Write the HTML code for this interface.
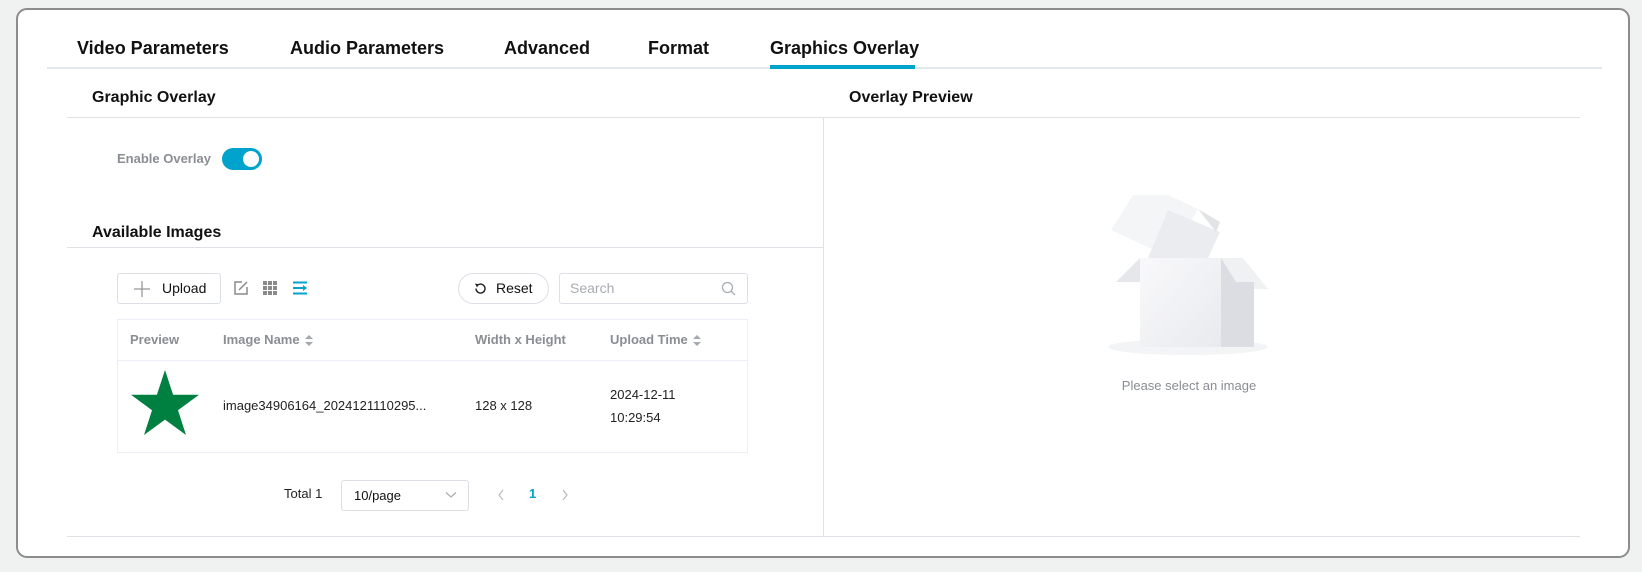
<!DOCTYPE html>
<html><head><meta charset="utf-8"><style>
*{margin:0;padding:0;box-sizing:border-box}
body{width:1642px;height:572px;background:#f0f1f1;font-family:"Liberation Sans",Arial,sans-serif;position:relative;overflow:hidden;color:#111}
.a{position:absolute;white-space:nowrap}
.card{position:absolute;left:16px;top:8px;width:1614px;height:550px;background:#fff;border:2px solid #8c8c8c;border-radius:11px}
.tab{font-size:18px;font-weight:bold;top:38px}
.h{font-size:16px;font-weight:bold}
.line{position:absolute;height:1px;background:#dfe1e6}
.th{font-size:13px;font-weight:bold;color:#8a8d93;top:332px}
.td{font-size:13px;color:#222}
.sort{display:inline-block;vertical-align:middle;margin-left:5px;width:8px;height:11px;position:relative}
.sort:before{content:"";position:absolute;top:0;left:0;border-left:4px solid transparent;border-right:4px solid transparent;border-bottom:4px solid #a5a8ad}
.sort:after{content:"";position:absolute;bottom:0;left:0;border-left:4px solid transparent;border-right:4px solid transparent;border-top:4px solid #a5a8ad}
</style></head><body>
<div class="card"></div>
<div class="a tab" style="left:77px">Video Parameters</div>
<div class="a tab" style="left:290px">Audio Parameters</div>
<div class="a tab" style="left:504px">Advanced</div>
<div class="a tab" style="left:648px">Format</div>
<div class="a tab" style="left:770px">Graphics Overlay</div>
<div class="line" style="left:47px;top:67px;width:1555px;height:2px;background:#e3e6ea"></div>
<div class="a" style="left:770px;top:65px;width:145px;height:4px;background:#00a3cc"></div>

<div class="a h" style="left:92px;top:89px">Graphic Overlay</div>
<div class="a h" style="left:849px;top:89px">Overlay Preview</div>
<div class="line" style="left:67px;top:117px;width:1513px"></div>
<div class="a" style="left:823px;top:117px;width:1px;height:419px;background:#dfe1e6"></div>

<div class="a" style="left:117px;top:151px;font-size:13px;font-weight:bold;color:#8a8d93">Enable Overlay</div>
<div class="a" style="left:222px;top:148px;width:40px;height:22px;border-radius:11px;background:#00a3cc"><div style="position:absolute;right:3px;top:3px;width:16px;height:16px;border-radius:50%;background:#fff"></div></div>

<div class="a h" style="left:92px;top:224px">Available Images</div>
<div class="line" style="left:67px;top:247px;width:756px"></div>

<div class="a" style="left:117px;top:273px;width:104px;height:31px;border:1px solid #dcdfe6;border-radius:3px;font-size:14px;line-height:29px;padding-left:44px">Upload</div>
<svg class="a" style="left:133px;top:280px" width="18" height="18"><path d="M9 1V17M1 9H17" stroke="#999" stroke-width="1.3"/></svg>
<svg class="a" style="left:233px;top:280px" width="16" height="16"><path d="M9 2H2V14H14V7" fill="none" stroke="#8a8a8a" stroke-width="1.5"/><path d="M6 10L14 2" stroke="#8a8a8a" stroke-width="1.5"/></svg>
<svg class="a" style="left:262px;top:280px" width="16" height="16" fill="#8a8a8a"><rect x="1" y="1" width="4" height="4"/><rect x="6" y="1" width="4" height="4"/><rect x="11" y="1" width="4" height="4"/><rect x="1" y="6" width="4" height="4"/><rect x="6" y="6" width="4" height="4"/><rect x="11" y="6" width="4" height="4"/><rect x="1" y="11" width="4" height="4"/><rect x="6" y="11" width="4" height="4"/><rect x="11" y="11" width="4" height="4"/></svg>
<svg class="a" style="left:292px;top:280px" width="16" height="16"><path d="M1 2.5H15M1 8H11M1 13.5H15" stroke="#00a3cc" stroke-width="2"/><path d="M11 5L15 8L11 11Z" fill="#00a3cc"/></svg>

<div class="a" style="left:458px;top:273px;width:91px;height:31px;border:1px solid #dcdfe6;border-radius:16px;font-size:14px;line-height:29px;padding-left:37px">Reset</div>
<svg class="a" style="left:474px;top:282px" width="13" height="13"><path d="M3.5 3.2A4.5 4.5 0 1 1 2 6.5" fill="none" stroke="#222" stroke-width="1.4"/><path d="M1 1.5L4.8 2.2L3 5.5Z" fill="#222"/></svg>
<div class="a" style="left:559px;top:273px;width:189px;height:31px;border:1px solid #dcdfe6;border-radius:3px;font-size:14px;line-height:29px;padding-left:10px;color:#a8abb2">Search</div>
<svg class="a" style="left:721px;top:281px" width="15" height="15"><circle cx="6.5" cy="6.5" r="5" fill="none" stroke="#a8abb2" stroke-width="1.3"/><path d="M10 10L14 14" stroke="#a8abb2" stroke-width="1.3"/></svg>

<div class="a" style="left:117px;top:319px;width:631px;height:134px;border:1px solid #ebeef5"></div>
<div class="line" style="left:117px;top:360px;width:631px;background:#ebeef5"></div>
<div class="a th" style="left:130px">Preview</div>
<div class="a th" style="left:223px">Image Name<span class="sort"></span></div>
<div class="a th" style="left:475px">Width x Height</div>
<div class="a th" style="left:610px">Upload Time<span class="sort"></span></div>
<svg class="a" style="left:130px;top:369px" width="70" height="68"><polygon points="35,1 43.1,25.8 69,25.8 48,41.2 56,66 35,50.6 14,66 22,41.2 1,25.8 26.9,25.8" fill="#008040"/></svg>
<div class="a td" style="left:223px;top:398px">image34906164_2024121110295...</div>
<div class="a td" style="left:475px;top:398px">128 x 128</div>
<div class="a td" style="left:610px;top:387px">2024-12-11</div>
<div class="a td" style="left:610px;top:410px">10:29:54</div>

<div class="a td" style="left:284px;top:486px">Total 1</div>
<div class="a" style="left:341px;top:480px;width:128px;height:31px;border:1px solid #dcdfe6;border-radius:3px;font-size:13px;line-height:29px;padding-left:12px">10/page</div>
<svg class="a" style="left:445px;top:491px" width="12" height="8"><path d="M1 1.5L6 6L11 1.5" fill="none" stroke="#a8abb2" stroke-width="1.2"/></svg>
<svg class="a" style="left:497px;top:489px" width="8" height="12"><path d="M6 1L2 6L6 11" fill="none" stroke="#bbb" stroke-width="1.2"/></svg>
<div class="a" style="left:529px;top:486px;font-size:13px;font-weight:bold;color:#00a3cc">1</div>
<svg class="a" style="left:561px;top:489px" width="8" height="12"><path d="M2 1L6 6L2 11" fill="none" stroke="#bbb" stroke-width="1.2"/></svg>

<div class="line" style="left:67px;top:536px;width:1513px"></div>

<svg class="a" style="left:1108px;top:192px" width="170" height="170">
<defs><linearGradient id="g" x1="0" y1="0" x2="1" y2="1"><stop offset="0" stop-color="#f9f9fb"/><stop offset="1" stop-color="#e9eaee"/></linearGradient></defs>
<ellipse cx="80" cy="155" rx="80" ry="8" fill="#f3f4f6"/>
<polygon points="25,3 60,3 90,17 63,66 3,38" fill="#f4f5f7"/>
<polygon points="60,18 112,40 100,66 40,66" fill="#ebecef"/>
<polygon points="90,17 112,30 108,40" fill="#e2e3e6"/>
<polygon points="32,66 32,90 8,90" fill="#e6e7ea"/>
<polygon points="32,66 113,66 113,155 32,155" fill="url(#g)"/>
<polygon points="113,66 135,66 160,97 140,97 113,155" fill="#f0f1f3"/>
<polygon points="113,66 128,90 146,90 146,155 113,155" fill="#dcdde3"/>
</svg>
<div class="a" style="left:1189px;top:378px;transform:translateX(-50%);font-size:13px;color:#8a8d93">Please select an image</div>
</body></html>
